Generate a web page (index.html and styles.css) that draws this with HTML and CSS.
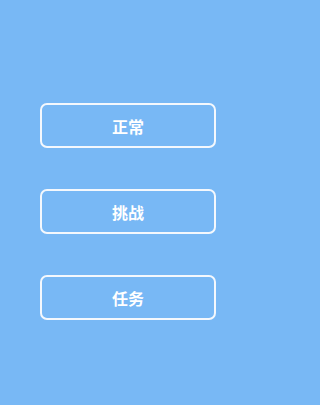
FILE: index.html
```html
<!DOCTYPE html>
<html>
<head>
<meta charset="utf-8">
<link rel="stylesheet" href="styles.css">
</head>
<body>
<div class="menu">
  <div class="btn">正常</div>
  <div class="btn">挑战</div>
  <div class="btn">任务</div>
</div>
</body>
</html>
```
FILE: styles.css
```css
html, body {
  margin: 0;
  padding: 0;
  height: 100%;
  background: #78b8f5;
}
.menu {
  display: flex;
  flex-direction: column;
  align-items: flex-start;
  gap: 41px;
  padding-top: 103px;
  padding-left: 40px;
}
.btn {
  box-sizing: border-box;
  width: 176px;
  height: 45px;
  border: 2px solid #f4f8fd;
  border-radius: 7px;
  display: flex;
  align-items: center;
  justify-content: center;
  color: #ffffff;
  font-family: "Noto Sans CJK SC", "Noto Sans", sans-serif;
  font-size: 16px;
  font-weight: 700;
}
```
